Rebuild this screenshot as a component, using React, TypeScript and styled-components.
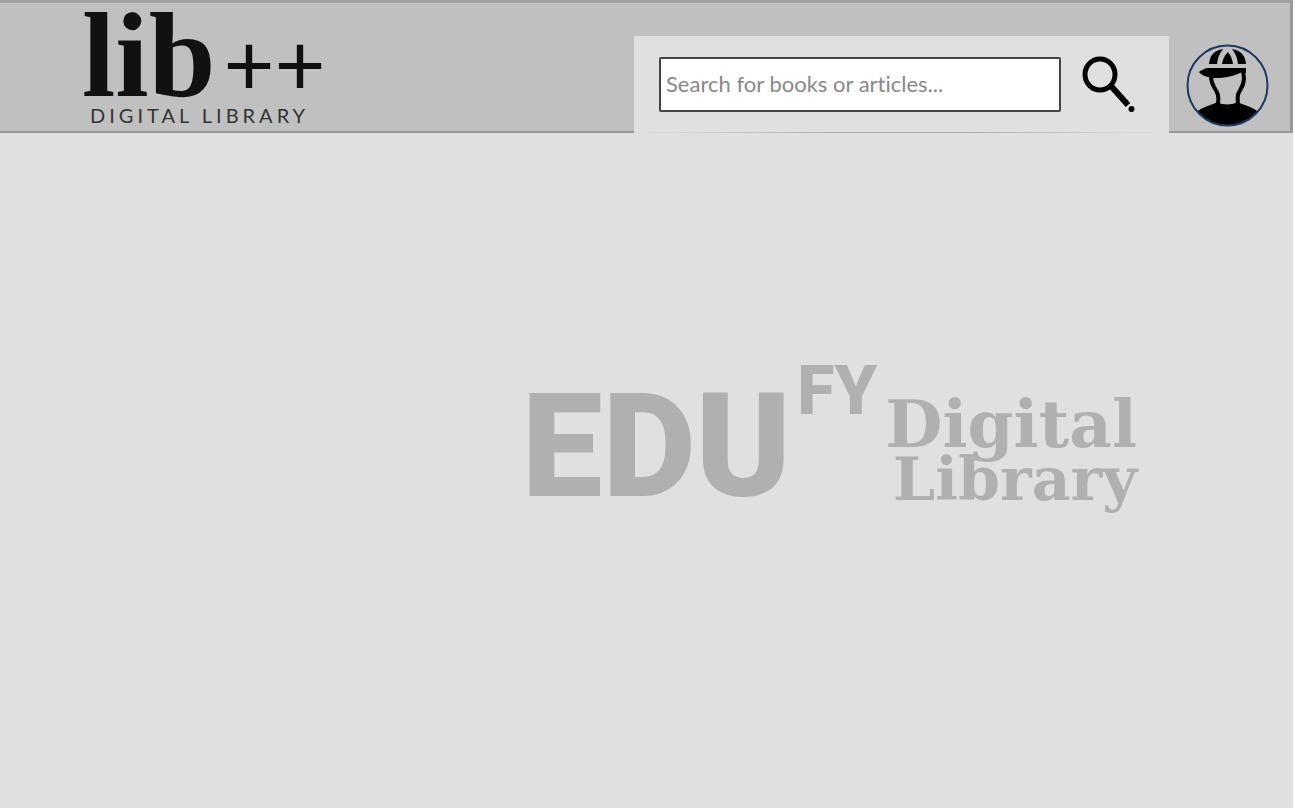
import React from "react";
import styled, { createGlobalStyle } from "styled-components";

const GlobalStyle = createGlobalStyle`
  * { box-sizing: border-box; }
  body {
    margin: 0;
    background: #fff;
    font-family: Lato, "Liberation Sans", sans-serif;
  }
`;

const Page = styled.div`
  display: flex;
  flex-direction: column;
  min-height: calc(100vh - 2px);
  margin: 0 2px 2px 0;
  background: #e0e0e0;
`;

const Header = styled.header`
  display: flex;
  align-items: flex-end;
  height: 133px;
  padding: 0 21px 0 82px;
  background: #c0c0c0;
  border: 3px solid #999;
  border-left: none;
  border-bottom-width: 2px;
  border-top-color: #a0a0a0;
`;

const Brand = styled.a`
  display: flex;
  flex-direction: column;
  align-self: flex-start;
  margin-right: auto;
  color: #111;
  text-decoration: none;
  white-space: nowrap;
`;

const BrandName = styled.span`
  display: flex;
  align-items: baseline;
  height: 98px;
  font-family: "Liberation Serif", serif;
  font-size: 120px;
  font-weight: 700;
  line-height: 106px;
`;

const BrandPlus = styled.span`
  padding-left: 8px;
  font-family: Lato, sans-serif;
  font-size: 88px;
  font-weight: 400;
  line-height: 96px;
`;

const BrandTagline = styled.span`
  padding-left: 8px;
  color: #333;
  font-size: 20px;
  letter-spacing: 4px;
  line-height: 28px;
`;

const SearchPanel = styled.form`
  display: flex;
  flex: 0 1 535px;
  align-items: center;
  gap: 20px;
  height: 97px;
  margin: 0 17px -2px 0;
  padding: 0 32px 0 25px;
  background:
    linear-gradient(90deg, #e0e0e0, #a8a8a8 40%, #a8a8a8 60%, #e0e0e0) bottom / 100% 1px no-repeat,
    #e0e0e0;
`;

const SearchInput = styled.input`
  flex: 1;
  min-width: 0;
  height: 55px;
  padding: 0 5px 2px;
  border: 2px solid #444;
  border-radius: 2px;
  background: #fff;
  color: #333;
  font-family: Lato, sans-serif;
  font-size: 22px;
  font-variant-ligatures: none;
  &::placeholder { color: #888; opacity: 1; }
`;

const IconButton = styled.button`
  display: flex;
  flex: none;
  padding: 0;
  border: none;
  background: none;
  color: #000;
  cursor: pointer;
`;

const AvatarButton = styled(IconButton)`
  margin-bottom: 4px;
`;

const Main = styled.main`
  display: flex;
  flex: 1;
  align-items: flex-start;
  justify-content: flex-end;
  padding: 218px 156px 0 0;
  color: #b0b0b0;
  white-space: nowrap;
`;

const Watermark = styled.div`
  display: flex;
  align-items: flex-start;
  gap: 8px;
`;

const WatermarkName = styled.h1`
  display: flex;
  align-items: flex-start;
  gap: 6px;
  margin: 0;
  font-family: Roboto, sans-serif;
  font-weight: 900;
`;

const NameBase = styled.span`
  padding-top: 24px;
  font-size: 144px;
  line-height: 144px;
`;

const NameRaised = styled.sup`
  font-size: 68px;
  line-height: 80px;
  vertical-align: baseline;
`;

const WatermarkSubject = styled.p`
  display: flex;
  flex-direction: column;
  align-items: flex-end;
  margin: 0;
  padding-top: 46px;
  font-family: "DejaVu Serif", serif;
  font-weight: 700;
`;

const SubjectLine = styled.span<{ $size: number }>`
  font-size: ${(p) => p.$size}px;
  line-height: 55px;
`;

function SearchIcon() {
  return (
    <svg width="56" height="58" viewBox="0 0 56 58" fill="none" aria-hidden="true">
      <ellipse cx="19" cy="18.500" rx="15" ry="15.500" stroke="currentColor" strokeWidth="5" />
      <path d="M30 30 47 49" stroke="currentColor" strokeWidth="6" />
      <circle cx="50.500" cy="53" r="3" fill="currentColor" />
    </svg>
  );
}

function AvatarIcon() {
  return (
    <svg width="83" height="83" viewBox="0 0 83 83" aria-hidden="true">
      <defs>
        <clipPath id="avatar-ring">
          <circle cx="41.500" cy="41.500" r="40" />
        </clipPath>
      </defs>
      <path
        clipPath="url(#avatar-ring)"
        d="M0 74 12 67C18 62 27 61 31 58Q41 63 52 58C56 61 65 62 71 67L83 74V83H0Z"
      />
      <path d="M23 20Q24 7 37 5Q32 11 31 20ZM36 20Q37 13 42 8Q46 13 47 20ZM46 5Q59 7 60 20H52Q51 11 46 5Z" />
      <path d="M21 24H60V29L56 28Q47 33 34 34L27 34C20 33 15 31 13 28Q15 26 21 24Z" />
      <path
        d="M25 32Q25 38 28 43C32 49 33 52 32 60M57 27 58 34C58 41 56 43 53 48Q51 52 52 60"
        fill="none"
        stroke="currentColor"
        strokeWidth="4"
      />
      <circle cx="41.500" cy="41.500" r="40" fill="none" stroke="#1f3864" strokeWidth="2" />
    </svg>
  );
}

export default function App() {
  return (
    <>
      <GlobalStyle />
      <Page>
        <Header>
          <Brand href="#">
            <BrandName>
              lib<BrandPlus>++</BrandPlus>
            </BrandName>
            <BrandTagline>DIGITAL LIBRARY</BrandTagline>
          </Brand>
          <SearchPanel role="search" onSubmit={(e) => e.preventDefault()}>
            <SearchInput
              type="text"
              aria-label="Search for books or articles"
              placeholder="Search for books or articles..."
            />
            <IconButton type="submit" aria-label="Search">
              <SearchIcon />
            </IconButton>
          </SearchPanel>
          <AvatarButton type="button" aria-label="Account">
            <AvatarIcon />
          </AvatarButton>
        </Header>
        <Main>
          <Watermark>
            <WatermarkName>
              <NameBase>EDU</NameBase>
              <NameRaised>FY</NameRaised>
            </WatermarkName>
            <WatermarkSubject>
              <SubjectLine $size={66}>Digital</SubjectLine>
              <SubjectLine $size={60}>Library</SubjectLine>
            </WatermarkSubject>
          </Watermark>
        </Main>
      </Page>
    </>
  );
}
